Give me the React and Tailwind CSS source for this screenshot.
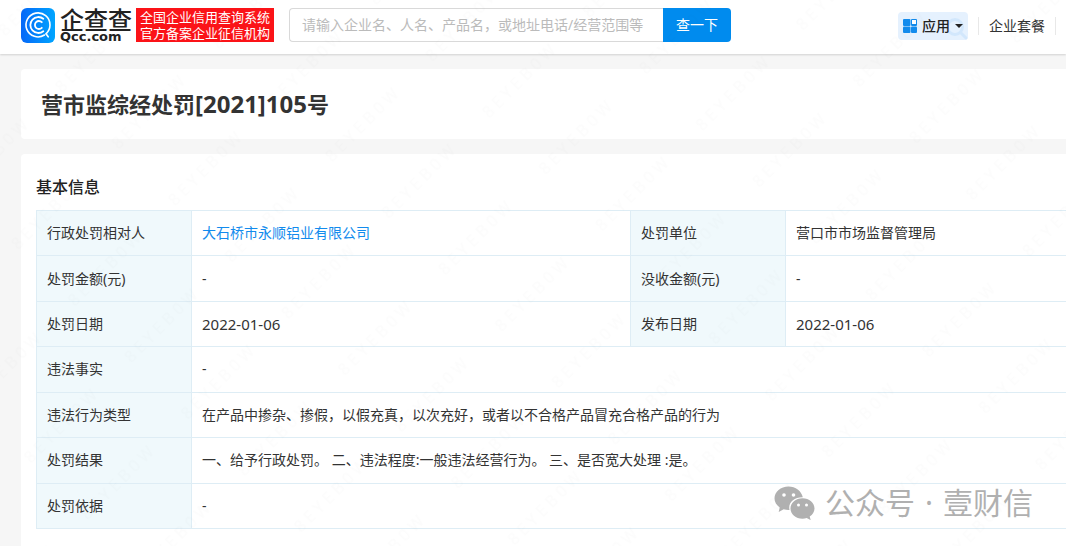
import { useState } from 'react';

const rows = [
  [
    { label: '行政处罚相对人', value: '大石桥市永顺铝业有限公司', href: '#company' },
    { label: '处罚单位', value: '营口市市场监督管理局' },
  ],
  [{ label: '处罚金额(元)', value: '-' }, { label: '没收金额(元)', value: '-' }],
  [{ label: '处罚日期', value: '2022-01-06', date: true }, { label: '发布日期', value: '2022-01-06', date: true }],
  [{ label: '违法事实', value: '-' }],
  [{ label: '违法行为类型', value: '在产品中掺杂、掺假，以假充真，以次充好，或者以不合格产品冒充合格产品的行为' }],
  [{ label: '处罚结果', value: '一、给予行政处罚。 二、违法程度:一般违法经营行为。 三、是否宽大处理 :是。' }],
  [{ label: '处罚依据', value: '-' }],
];

export default function App() {
  return (
    <div lang="zh-CN" className="relative flex min-h-screen flex-col overflow-hidden bg-[#f6f6f6] font-['Noto_Sans','Noto_Sans_CJK_SC',sans-serif] text-sm text-[#333]">
      <Header />
      <main className="flex grow flex-col gap-[15px] pt-[15px] pl-[21px]">
        <section className="rounded-l bg-white px-5 py-5">
          <h1 className="text-[22px] leading-[30px] font-bold">
            营市监综经处罚<span className="text-2xl leading-[30px]">[2021]105</span>号
          </h1>
        </section>
        <section className="grow rounded-tl bg-white pt-[21px] pb-4 pl-[15px]">
          <h2 className="mb-[11px] text-base leading-6 font-medium text-[#222]">基本信息</h2>
          <DetailTable />
        </section>
      </main>
      <Watermark />
      <AccountTag />
    </div>
  );
}

function Header() {
  const [keyword, setKeyword] = useState('');

  return (
    <header className="flex h-[54px] shrink-0 items-center bg-white pr-[10px] pb-1 pl-[21px] shadow-[0_1px_2px_rgba(0,0,0,0.15)]">
      <a href="#home" className="flex shrink-0 items-center gap-[5px]">
        <LogoMark />
        <span className="flex w-[71px] flex-col text-[#222]">
          <span className="font-['Noto_Sans_CJK_SC',sans-serif] text-2xl leading-[22px] font-medium whitespace-nowrap">企查查</span>
          <span className="font-['DejaVu_Sans',sans-serif] text-[13px] leading-[13px] font-bold">Qcc.com</span>
        </span>
        <span className="bg-[#fb1318] px-1 py-px font-['Noto_Sans_CJK_SC',sans-serif] text-[13px] leading-4 whitespace-nowrap text-white">
          <span className="block">全国企业信用查询系统</span>
          <span className="block">官方备案企业征信机构</span>
        </span>
      </a>

      <form className="ml-[15px] flex h-[34px] w-[442px]" onSubmit={e => e.preventDefault()}>
        <input
          aria-label="搜索"
          value={keyword}
          onChange={e => setKeyword(e.target.value)}
          placeholder="请输入企业名、人名、产品名，或地址电话/经营范围等"
          className="min-w-0 flex-1 rounded-l border border-r-0 border-[#d9d9d9] px-3 outline-none placeholder:text-[#bbb]"
        />
        <button type="submit" className="w-[68px] rounded-r-sm bg-[#008bee] text-white">查一下</button>
      </form>

      <nav className="ml-auto flex items-center pt-0.5 whitespace-nowrap">
        <button type="button" className="relative flex h-7 items-center gap-[5px] rounded bg-[#e5f1fe] px-[5px] font-medium text-[#222]">
          <svg className="absolute right-0 bottom-0 size-6" viewBox="0 0 24 24" fill="none" stroke="#d2e7fc" strokeWidth="3">
            <circle cx="11" cy="11" r="7.5" />
            <path d="M17 17l5 5" strokeLinecap="round" />
          </svg>
          <svg className="size-[14px]" viewBox="0 0 14 14">
            <g fill="#128bed">
              <rect width="7.5" height="7" rx="1" />
              <rect x="8" width="6" height="7" rx="1" />
              <rect y="7.5" width="7.5" height="6.5" rx="1" />
              <rect x="8" y="7.5" width="6" height="6.5" rx="1" />
            </g>
            <rect x="9" y="1" width="4" height="4" fill="#fff" />
          </svg>
          <span className="relative">应用</span>
          <svg className="relative h-[4px] w-2" viewBox="0 0 8 4"><path d="M0 0h8L4 4z" fill="#222" /></svg>
        </button>
        <span className="ml-[10px] h-[18px] w-px bg-[#e8e8e8]" />
        <a href="#plans" className="px-[10px]">企业套餐</a>
        <span className="h-[18px] w-px bg-[#e8e8e8]" />
      </nav>
    </header>
  );
}

function LogoMark() {
  return (
    <svg className="h-[35px] w-[34px]" viewBox="0 0 34 35" fill="none">
      <defs>
        <linearGradient id="logo" x1="0" y1="0" x2="1" y2="0">
          <stop offset="0" stopColor="#0568f8" />
          <stop offset="1" stopColor="#00a5ff" />
        </linearGradient>
      </defs>
      <rect width="34" height="35" rx="6" fill="url(#logo)" />
      <g stroke="#fff" strokeLinecap="round">
        <path d="M23.500 27A12 12 0 1 1 29 17C29 20.500 27.500 23.500 25 25.800L27.200 28.800" strokeWidth="1.600" />
        <path d="M22.300 10.700A8 8 0 1 0 22.300 23.300" strokeWidth="1.800" />
        <path d="M20.800 14.200A4 4 0 1 0 20.800 19.800" strokeWidth="1.800" />
      </g>
    </svg>
  );
}

function DetailTable() {
  return (
    <table className="h-[319px] w-full table-fixed border-collapse border border-r-0 border-[#deedf5] text-left">
      <colgroup>
        <col className="w-[155px]" />
        <col className="w-[439px]" />
        <col className="w-[155px]" />
        <col />
      </colgroup>
      <tbody>
        {rows.map(cells => (
          <tr key={cells[0].label} className="border-b border-[#deedf5]">
            {cells.map(cell => <Cell key={cell.label} cell={cell} wide={cells.length === 1} />)}
          </tr>
        ))}
      </tbody>
    </table>
  );
}

function Cell({ cell, wide }) {
  return (
    <>
      <th scope="row" className="border-x border-[#deedf5] bg-[#f0f9fc] px-[10px] font-normal">{cell.label}</th>
      <td colSpan={wide ? 3 : 1} className={`px-[10px] ${cell.date ? 'text-[15px] leading-5' : ''}`}>
        {cell.href ? <a href={cell.href} className="text-[#128bed]">{cell.value}</a> : cell.value}
      </td>
    </>
  );
}

// faint diagonal session code repeated over the whole page
function Watermark() {
  return (
    <svg aria-hidden="true" className="pointer-events-none absolute inset-0 size-full">
      <defs>
        <pattern id="mark" width="142" height="80" patternUnits="userSpaceOnUse" patternTransform="translate(31 68) rotate(-45)">
          <text x="4" y="40" fontSize="16" fill="#000" fillOpacity="0.012">8 E Y E B 0 W</text>
        </pattern>
      </defs>
      <rect width="100%" height="100%" fill="url(#mark)" />
    </svg>
  );
}

function AccountTag() {
  return (
    <div className="absolute right-[33px] bottom-[26px] flex items-center gap-[10px] text-[30px] leading-[34px] whitespace-nowrap text-[#b0b0b0]">
      <svg className="h-[34px] w-[41px]" viewBox="0 0 41 34" fill="#b0b0b0">
        <path d="M14.500 0.500C6.700 0.500 0.500 5.700 0.500 12.300c0 3.700 2 7 5.200 9.200L4.700 26l5-2.700c1.500.5 3.200.7 4.800.7h1C13.800 16.500 20 11 28.800 11.200 27.500 5 21.500.5 14.500.5z" />
        <path d="M28.500 12.300c-6.700 0-12 4.500-12 10.200s5.300 10.200 12 10.200c1.500 0 2.900-.2 4.200-.6l4 2-1-3.600c2.900-1.900 4.800-4.700 4.800-8 0-5.700-5.300-10.200-12-10.200z" />
        <g fill="#fff">
          <circle cx="10" cy="9" r="1.800" />
          <circle cx="19.500" cy="9" r="1.800" />
          <circle cx="24.500" cy="19" r="1.500" />
          <circle cx="32.500" cy="19" r="1.500" />
        </g>
      </svg>
      <span>公众号</span>
      <span>·</span>
      <span>壹财信</span>
    </div>
  );
}
